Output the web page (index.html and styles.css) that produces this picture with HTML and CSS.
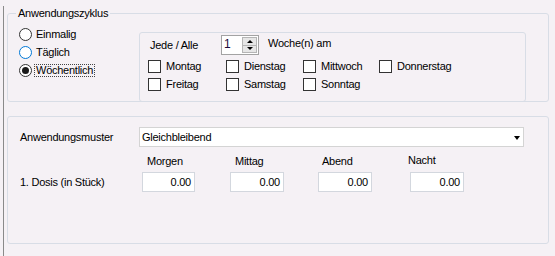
FILE: index.html
```html
<!DOCTYPE html>
<html lang="de">
<head>
    <meta charset="UTF-8">
    <title>Anwendung</title>
    <link rel="stylesheet" href="styles.css">
</head>
<body>
    <div class="form">
        <fieldset class="cycle">
            <legend>Anwendungszyklus</legend>
            <div class="cycle-body">
                <div class="radios">
                    <label class="radio"><span class="dot"></span>Einmalig</label>
                    <label class="radio hover"><span class="dot"></span>Täglich</label>
                    <label class="radio checked"><span class="dot"></span><span class="focus">Wöchentlich</span></label>
                </div>
                <div class="weekly">
                    <div class="repeat">
                        <span class="repeat-label">Jede / Alle</span>
                        <div class="spin">
                            <span class="spin-value">1</span>
                            <span class="spin-buttons"><span class="spin-btn up"></span><span class="spin-btn down"></span></span>
                        </div>
                        <span class="repeat-unit">Woche(n) am</span>
                    </div>
                    <div class="days">
                        <label class="check"><span class="box"></span>Montag</label>
                        <label class="check"><span class="box"></span>Dienstag</label>
                        <label class="check"><span class="box"></span>Mittwoch</label>
                        <label class="check"><span class="box"></span>Donnerstag</label>
                        <label class="check"><span class="box"></span>Freitag</label>
                        <label class="check"><span class="box"></span>Samstag</label>
                        <label class="check"><span class="box"></span>Sonntag</label>
                    </div>
                </div>
            </div>
        </fieldset>

        <div class="pattern">
            <div class="row-select">
                <span class="row-label">Anwendungsmuster</span>
                <div class="select"><span>Gleichbleibend</span><span class="caret"></span></div>
            </div>
            <div class="row-grid row-heads">
                <span></span>
                <span class="head">Morgen</span>
                <span class="head">Mittag</span>
                <span class="head abend">Abend</span>
                <span class="head nacht">Nacht</span>
            </div>
            <div class="row-grid row-dose">
                <span class="row-label">1. Dosis (in Stück)</span>
                <span class="num">0.00</span>
                <span class="num">0.00</span>
                <span class="num">0.00</span>
                <span class="num">0.00</span>
            </div>
        </div>
    </div>
</body>
</html>
```

FILE: styles.css
```css
body { margin: 0; background: #f5f1f5; color: #000; font: 11px/13px "Liberation Sans", Arial, sans-serif; letter-spacing: -0.25px; }
.form { width: 551px; height: 252px; margin-left: 3px; border-left: 1px solid #8a8a8a; }

/* Anwendungszyklus */
.cycle { width: 542px; box-sizing: border-box; margin: 6px 0 0 3px; padding: 0; min-width: 0; border: 1px solid #d8dde6; border-radius: 3px; }
.cycle legend { margin-left: 8px; padding: 0 2px; line-height: 14px; }
.cycle-body { display: flex; height: 81px; }
.radios { width: 131px; box-sizing: border-box; padding: 5px 0 0 11px; }
.radio { display: flex; align-items: center; height: 18px; gap: 4px; }
.radio .dot { width: 13px; height: 13px; box-sizing: border-box; border: 1px solid #333; border-radius: 50%; background: #fff; display: flex; align-items: center; justify-content: center; }
.radio.hover .dot { border-color: #0078d7; }
.radio.checked .dot::after { content: ""; width: 7px; height: 7px; border-radius: 50%; background: #1a1a1a; }
.radio .focus { margin-left: -2px; padding: 0 1px; border: 1px dotted #444; line-height: 11px; }

.weekly { width: 387px; height: 70px; box-sizing: border-box; margin-top: 12px; border: 1px solid #d8dde6; border-radius: 3px; }
.repeat { display: flex; align-items: center; height: 20px; margin-top: 2px; padding-left: 10px; }
.repeat-label { width: 71px; padding-top: 1px; }
.repeat-unit { margin-left: 9px; padding-bottom: 3px; }
.spin { display: flex; width: 38px; height: 20px; box-sizing: border-box; border: 1px solid #a3a3a3; background: #fff; }
.spin-value { flex: 1; padding: 2px 0 0 2px; color: #1b0a3a; font-size: 12px; }
.spin-buttons { display: flex; flex-direction: column; width: 15px; padding: 1px 1px 1px 0; }
.spin-btn { flex: 1; display: flex; align-items: center; justify-content: center; background: #e6e6e6; border: 1px solid #b5b5b5; }
.spin-btn.down { border-top: none; }
.spin-btn.up::after { content: ""; border: 3px solid transparent; border-bottom: 3px solid #000; border-top: none; }
.spin-btn.down::after { content: ""; border: 3px solid transparent; border-top: 3px solid #000; border-bottom: none; }

.days { display: grid; grid-template-columns: 78px 77px 76px auto; grid-auto-rows: 18px; margin-top: 2px; padding-left: 8px; }
.check { display: flex; align-items: center; gap: 5px; }
.check .box { width: 13px; height: 13px; box-sizing: border-box; border: 1px solid #333; background: #fff; }

/* Anwendungsmuster */
.pattern { width: 542px; height: 128px; box-sizing: border-box; margin: 14px 0 0 3px; padding: 10px 0 0 12px; border: 1px solid #d8dde6; border-radius: 3px; }
.row-select { display: flex; align-items: center; height: 20px; }
.row-select .row-label { width: 119px; }
.select { display: flex; align-items: center; justify-content: space-between; width: 385px; height: 20px; box-sizing: border-box; padding: 0 3px 0 2px; border: 1px solid #d4d4d4; background: #fff; }
.caret { border: 3.5px solid transparent; border-top: 4px solid #000; border-bottom: none; margin-top: 1px; }

.row-grid { display: grid; grid-template-columns: 122px 88px 88px 92px 54px; }
.row-heads { margin-top: 8px; height: 13px; }
.head { padding-left: 5px; }
.head.abend { padding-left: 4px; }
.head.nacht { padding-left: 0; margin-left: -2px; margin-top: -1px; }
.row-dose { margin-top: 4px; align-items: center; }
.num { width: 53px; height: 20px; box-sizing: border-box; padding-right: 3px; border: 1px solid #d3d7de; background: #fff; text-align: right; line-height: 18px; }
.num:nth-child(n+3) { width: 54px; }
```
